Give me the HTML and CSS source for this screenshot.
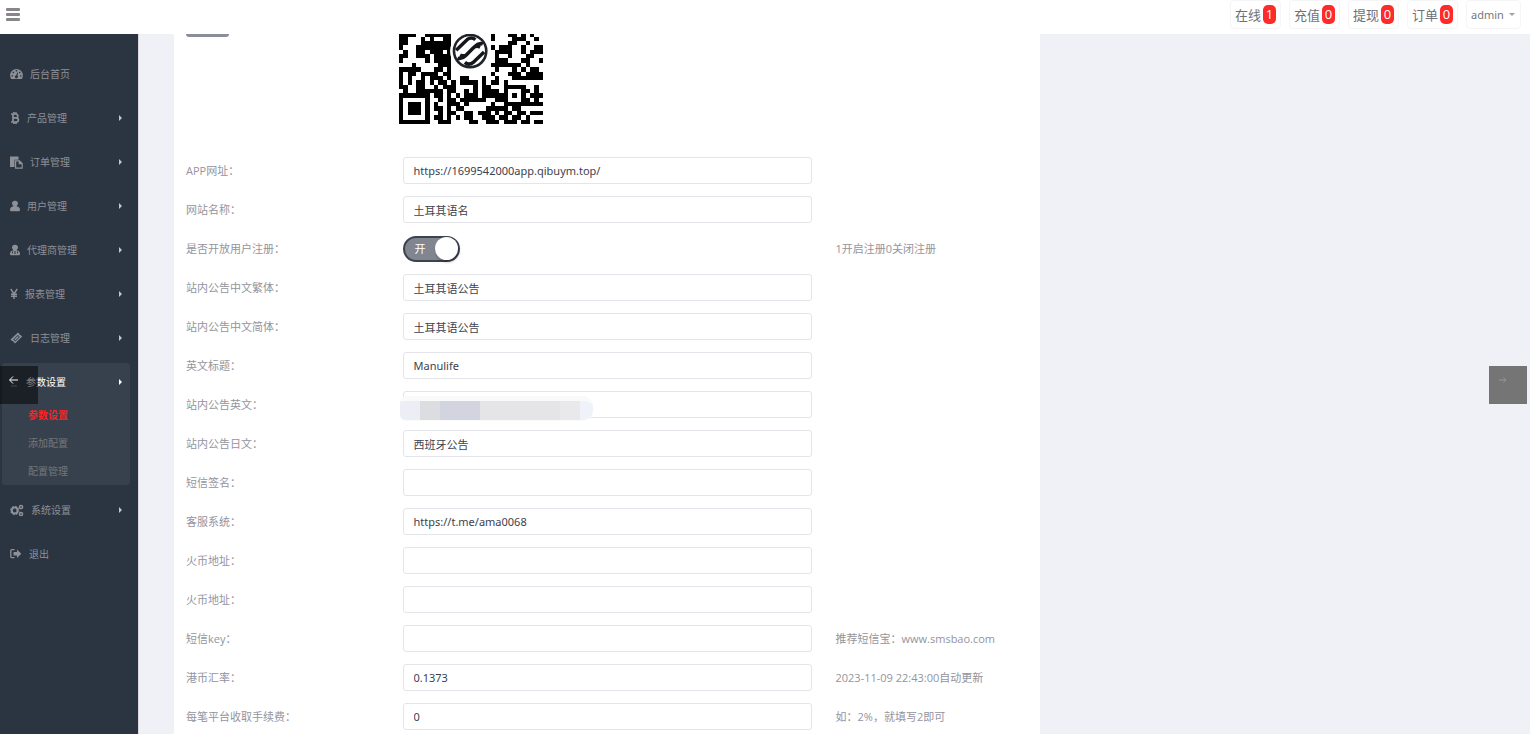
FILE: index.html
```
<!DOCTYPE html>
<html lang="zh-CN">
<head>
<meta charset="utf-8">
<title>参数设置</title>
<link rel="stylesheet" href="styles.css">
</head>
<body>
<header class="topbar">
  <button class="menu-toggle" type="button" aria-label="菜单"><span></span><span></span><span></span></button>
  <nav class="shortcuts">
    <a href="#">在线<b>1</b></a>
    <a href="#">充值<b>0</b></a>
    <a href="#">提现<b>0</b></a>
    <a href="#">订单<b>0</b></a>
    <button class="account" type="button">admin<i class="caret"></i></button>
  </nav>
</header>
<div class="layout">
  <nav class="sidebar">
    <a class="item" href="#"><svg width="13" height="12" viewBox="0 0 13 12"><path fill="currentColor" fill-rule="evenodd" d="M1.2 11A6.4 6.4 0 1 1 11.800 11ZM1.500 7.200h1.600v1.400H1.500ZM2.600 3.800h1.500v1.500H2.600ZM5.700 2h1.500v1.500H5.700ZM10 7.200h1.500v1.400H10ZM9 3.700h1.400v1.500H9ZM7.300 4.500L6.200 7.300a1.500 1.500 0 1 0 1.200.3L8.200 4.800Z"/></svg>后台首页</a>
    <a class="item" href="#"><svg width="10" height="12" viewBox="0 0 10 12"><path fill="none" stroke="currentColor" stroke-width="1.700" d="M1 2h4.500q2.300 0 2.300 2T5.500 5.900H3M5.500 5.900q2.900 0 2.900 2T5.500 10H1M3 2v8M4 0v2M6 .2v2M4 10v2M6 10v2"/></svg>产品管理<i class="arrow"></i></a>
    <a class="item" href="#"><svg width="13" height="13" viewBox="0 0 13 13"><path fill="currentColor" d="M0 .5h8.500v3.200H4.500V11H0Z"/><path fill="none" stroke="currentColor" stroke-width="1.200" d="M5.600 4.800h3.900l2.700 2.700v4.700H5.600ZM9.300 4.800v2.900h2.900"/></svg>订单管理<i class="arrow"></i></a>
    <a class="item" href="#"><svg width="10" height="12" viewBox="0 0 10 12"><path fill="currentColor" d="M5 .7a2.700 2.700 0 0 1 2 4.800l-.4.800Q10 7 10 10q0 1.200-1.200 1.200H1.200Q0 11.200 0 10q0-3 3.400-3.700L3 5.500A2.700 2.700 0 0 1 5 .7Z"/></svg>用户管理<i class="arrow"></i></a>
    <a class="item" href="#"><svg width="10" height="12" viewBox="0 0 10 12"><path fill="currentColor" fill-rule="evenodd" d="M5 .7a2.700 2.700 0 0 1 2 4.800l-.4.800Q10 7 10 10q0 1.200-1.200 1.200H1.200Q0 11.200 0 10q0-3 3.400-3.700L3 5.500A2.700 2.700 0 0 1 5 .7ZM2 7.500h1v1.800H2ZM4.500 7h1v3h-1ZM7 7.500h1v1.800H7Z"/></svg>代理商管理<i class="arrow"></i></a>
    <a class="item" href="#"><svg width="8" height="12" viewBox="0 0 8 12"><path fill="none" stroke="currentColor" stroke-width="1.400" d="M.8 1L4 6l3.200-5M4 6v5M1 6.200h6M1 8.300h6"/></svg>报表管理<i class="arrow"></i></a>
    <a class="item" href="#"><svg width="13" height="12" viewBox="0 0 13 12"><path fill="currentColor" fill-rule="evenodd" d="M.5 7.500L8 .5l1.300 1.200q0 1.400 1.600 1.500L12.200 4.500 5 11.500 3.800 10.300Q3.700 8.800 1.800 8.800ZM3.200 7.400L7.800 2.900 9.900 5 5.300 9.400ZM4.200 7.400l3.600-3.500 1.100 1.100-3.600 3.400Z"/></svg>日志管理<i class="arrow"></i></a>
    <div class="group">
      <a class="item current" href="#"><svg width="9" height="12" viewBox="0 0 9 12"><path fill="none" stroke="currentColor" opacity=".4" d="M1 10h6"/></svg>参数设置<i class="arrow"></i></a>
      <a class="sub chosen" href="#">参数设置</a>
      <a class="sub" href="#">添加配置</a>
      <a class="sub" href="#">配置管理</a>
    </div>
    <a class="item" href="#"><svg width="14" height="13" viewBox="0 0 14 13"><circle cx="4.700" cy="6.500" r="2.900" fill="none" stroke="currentColor" stroke-width="2"/><circle cx="4.700" cy="6.500" r="4.200" fill="none" stroke="currentColor" stroke-dasharray="1.700 1.600"/><circle cx="11" cy="3" r="1.600" fill="none" stroke="currentColor" stroke-width="1.500"/><circle cx="11" cy="10" r="1.600" fill="none" stroke="currentColor" stroke-width="1.500"/></svg>系统设置<i class="arrow"></i></a>
    <a class="item" href="#"><svg width="12" height="12" viewBox="0 0 12 12"><path fill="none" stroke="currentColor" stroke-width="1.300" d="M4.500 1.700H2Q.8 1.700.8 3v5.500q0 1.200 1.200 1.200h2.500"/><path fill="currentColor" d="M3.500 4H7V1.500l4.300 4.200L7 10V7.500H3.500Z"/></svg>退出</a>
  </nav>
  <main class="content">
    <form class="panel">
      <div class="row qr-row">
        <div><button class="upload" type="button" aria-label="上传"></button></div>
        <div><svg class="qr" viewBox="0 12.400 33 20.600" role="img" aria-label="二维码"><g id="modules"></g>
          <circle cx="16.300" cy="16.300" r="4.600" fill="#fff"/>
          <circle cx="16.300" cy="16.300" r="3.700" fill="#fff" stroke="#20232a" stroke-width=".6"/>
          <path fill="none" stroke="#15171c" stroke-width=".8" d="M13.100 16.100l2.500-2.400q1-.8 1.900 0M14 17.200q.9.500 1.600-.2l1.700-1.700q1-1 1.900-.6M19.500 16.500l-2.500 2.400q-1 .8-1.900 0M18.600 15.400q-.9-.5-1.600.2l-1.700 1.700q-1 1-1.900.6"/></svg></div>
      </div>
      <div class="row"><label for="f1">APP网址：</label><div><input id="f1" value="https://1699542000app.qibuym.top/"></div></div>
      <div class="row"><label for="f2">网站名称：</label><div><input id="f2" value="土耳其语名"></div></div>
      <div class="row"><label for="f3">是否开放用户注册：</label><div><label class="switch"><input id="f3" type="checkbox" checked><span>开</span></label></div><p>1开启注册0关闭注册</p></div>
      <div class="row"><label for="f4">站内公告中文繁体：</label><div><input id="f4" value="土耳其语公告"></div></div>
      <div class="row"><label for="f5">站内公告中文简体：</label><div><input id="f5" value="土耳其语公告"></div></div>
      <div class="row"><label for="f6">英文标题：</label><div><input id="f6" value="Manulife"></div></div>
      <div class="row"><label for="f7">站内公告英文：</label><div class="masked"><input id="f7"><span class="mask"></span></div></div>
      <div class="row"><label for="f8">站内公告日文：</label><div><input id="f8" value="西班牙公告"></div></div>
      <div class="row"><label for="f9">短信签名：</label><div><input id="f9"></div></div>
      <div class="row"><label for="f10">客服系统：</label><div><input id="f10" value="https://t.me/ama0068"></div></div>
      <div class="row"><label for="f11">火币地址：</label><div><input id="f11"></div></div>
      <div class="row"><label for="f12">火币地址：</label><div><input id="f12"></div></div>
      <div class="row"><label for="f13">短信key：</label><div><input id="f13"></div><p>推荐短信宝：www.smsbao.com</p></div>
      <div class="row"><label for="f14">港币汇率：</label><div><input id="f14" value="0.1373"></div><p>2023-11-09 22:43:00自动更新</p></div>
      <div class="row"><label for="f15">每笔平台收取手续费：</label><div><input id="f15" value="0"></div><p>如：2%，就填写2即可</p></div>
    </form>
  </main>
  <button class="pager prev" type="button" aria-label="上一页"><svg width="12" height="10" viewBox="0 0 12 10"><path fill="none" stroke="currentColor" d="M10 5H2M5 1.500L1.500 5 5 8.500"/></svg></button>
  <button class="pager next" type="button" aria-label="下一页"><svg width="12" height="10" viewBox="0 0 12 10"><path fill="none" stroke="currentColor" d="M2 5h7M6.500 2.500L9 5 6.500 7.500"/></svg></button>
</div>
<script src="qr.js"></script>
</body>
</html>
```

FILE: styles.css
```
* { box-sizing: border-box; }
body {
  margin: 0;
  height: 100vh;
  display: flex;
  flex-direction: column;
  overflow: hidden;
  background: #f0f1f7;
  color: #94949e;
  font: 11px/16px "Open Sans", "Noto Sans CJK SC", sans-serif;
}
a { color: inherit; text-decoration: none; }
button, input { font: inherit; color: inherit; }

.topbar {
  flex: none;
  height: 34px;
  display: flex;
  justify-content: space-between;
  align-items: flex-start;
  padding: 0 9px 0 6px;
  background: #fff;
}
.menu-toggle {
  display: flex;
  flex-direction: column;
  gap: 2px;
  width: 14px;
  margin-top: 8px;
  padding: 0;
  border: 0;
  background: none;
}
.menu-toggle span { height: 3px; background: #8a858b; border-radius: 1px; }
.shortcuts { display: flex; gap: 8px; }
.shortcuts a, .account {
  display: flex;
  align-items: center;
  height: 29px;
  padding: 0 4px;
  border: 1px solid #f5f5f8;
  border-radius: 4px;
  background: #fff;
  color: #707076;
}
.shortcuts a { width: 51px; gap: 2px; font-size: 13px; }
.shortcuts b {
  width: 13px;
  border-radius: 5px;
  background: #ff2a2a;
  color: #fff;
  font-weight: 400;
  line-height: 19px;
  text-align: center;
}
.account { width: 55px; gap: 5px; font-family: "Noto Sans", sans-serif; font-size: 11px; color: #77777f; }
.caret { border: 3px solid transparent; border-top-color: #a0a0a8; border-bottom: 0; }

.layout { position: relative; flex: 1; min-height: 0; display: flex; }
.sidebar {
  flex: none;
  width: 138px;
  display: flex;
  flex-direction: column;
  gap: 6px;
  padding: 21px 8px 0 2px;
  background: #2b3541;
  font-size: 10px;
  color: #8d9097;
}
.item {
  display: flex;
  align-items: center;
  gap: 7px;
  height: 38px;
  padding: 0 8px;
}
.arrow {
  margin-left: auto;
  border: 3px solid transparent;
  border-left-color: #c3c6cb;
  border-right: 0;
}
.group { border-radius: 3px; background: #37414d; }
.current { color: #fff; }
.current .arrow { border-left-color: #fff; }
.sub { display: block; padding-left: 26px; line-height: 28px; color: #74767c; }
.chosen { color: #ff2222; font-weight: 700; }

.content {
  flex: 1;
  display: grid;
  grid-template-columns: 866fr 490fr;
  padding-left: 35px;
  border-left: 1px solid #ddd6dd;
}
.panel { background: #fff; }
.row {
  display: grid;
  grid-template-columns: 1fr 2fr 1fr;
  align-items: center;
  height: 39px;
}
.row > * { margin: 0; padding: 0 12px; }
.qr-row { height: 117px; align-items: start; }
.qr-row > :last-child { padding-left: 8px; }
.upload {
  display: block;
  width: 43px;
  height: 3px;
  padding: 0;
  border: 0;
  border-radius: 0 0 3px 3px;
  background: #8b8e96;
}
.qr { display: block; width: 144px; height: 90px; }
.row input:not([type]) {
  display: block;
  width: 100%;
  height: 27px;
  padding: 0 10px;
  border: 1px solid #e4e5ea;
  border-radius: 3px;
  background: #fff;
  color: #3c424e;
  font-family: "Noto Sans", "Noto Sans CJK SC", sans-serif;
  outline: 0;
}
.switch { display: block; position: relative; width: 57px; }
.switch input { position: absolute; opacity: 0; }
.switch span {
  display: flex;
  align-items: center;
  justify-content: space-between;
  height: 26px;
  padding-left: 10px;
  border: 2px solid #3b434f;
  border-radius: 13px;
  background: #80858f;
  color: #fff;
}
.switch span::after {
  content: "";
  width: 23px;
  height: 23px;
  border-radius: 50%;
  background: #fff;
  box-shadow: 1px 2px 3px #0004;
}
.masked { position: relative; }
.mask {
  position: absolute;
  left: 9px;
  top: 5px;
  width: 193px;
  height: 25px;
  border: solid #fafafb;
  border-width: 5px 0 1px;
  border-radius: 6px 10px 10px 6px;
  background: linear-gradient(90deg, #eceef5 20px, #dcdde1 20px 40px, #d2d5df 40px 80px, #e5e5e7 80px 160px, #e9e9ec 160px 180px, #f0f2fa 180px);
}

.pager {
  position: absolute;
  top: 332px;
  width: 38px;
  height: 38px;
  display: flex;
  padding: 9px 8px;
  border: 0;
}
.prev { left: 0; background: #00000080; color: #fff; }
.next { right: 3px; background: #757575; color: #92959c; }
```

FILE: qr.js
```
// Dark columns of each module row, as inclusive ranges.
const rows = {
  12: "0-3 6-11 21 25-26 28 30",
  13: "0-1 5 7 10-11 21 26-28 31",
  14: "0-1 5-11 25-26 29",
  15: "0 4-11 21 23-25 28 31-32",
  16: "1 4-5 7-9 11 22-25 28 30-32",
  17: "0-1 4-6 8-11 22 25 29-30",
  18: "0 6 8-11 22-24 28-29 32",
  19: "3 9-11 21-27 29",
  20: "0-4 8-9 11 22 26 28 30-31",
  21: "0 2-3 5-8 10-11 21 25-27 29-32",
  22: "0 2 5 7-9 11 14-15 19 22 26-32",
  23: "0 2 4-5 7 9-10 12 14-17 19 21-22 24",
  24: "0-1 4-5 8 10-11 12 17 19-20 24-28 31",
  25: "1 4-9 11-12 15 17 19-22 24 28-29 31",
  26: "0-6 8-9 11 13 15-17 19-24 26 28 30-32",
  27: "0 6 9 11-12 14-19 22-24 28-29 31",
  28: "0 2-4 6 8 11-13 15 21 24-32",
  29: "0 2-4 6 8-9 11 13-14 20-24 26-27",
  30: "0 2-4 6 9 11-12 15-16 18-20 22 24-25 27-28 30-32",
  31: "0 6 8-9 11 13 15-16 19-21 23-24 26-27 29",
  32: "0-6 9-11 16-17 20-22 24-26 28-29 31-32"
};
let d = "";
for (const [y, spans] of Object.entries(rows)) {
  for (const span of spans.split(" ")) {
    const [from, to = from] = span.split("-").map(Number);
    d += `M${from} ${y}h${to - from + 1}v1H${from}Z`;
  }
}
const path = document.createElementNS("http://www.w3.org/2000/svg", "path");
path.setAttribute("d", d);
path.setAttribute("shape-rendering", "crispEdges");
document.getElementById("modules").append(path);
```
